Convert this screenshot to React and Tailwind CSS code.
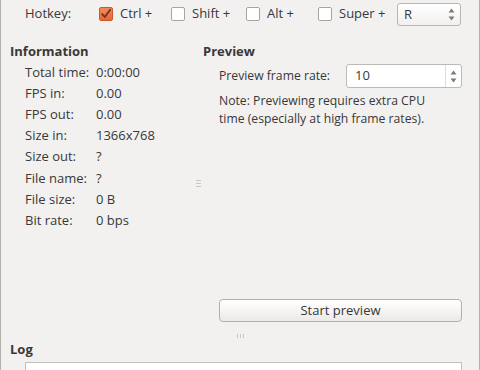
import { ChevronUp, ChevronDown } from 'lucide-react'

function CheckBox({ checked }) {
  if (checked) {
    return (
      <span className="w-[14px] h-[14px] rounded-[2px] border border-[#c9592c] bg-gradient-to-b from-[#f4895a] to-[#e5673a] flex items-center justify-center shrink-0">
        <svg width="12" height="12" viewBox="0 0 12 12">
          <path d="M2.2 6.2 L4.8 9 L10.2 1.8" fill="none" stroke="#6a3420" strokeWidth="1.8" strokeLinecap="round" strokeLinejoin="round" />
        </svg>
      </span>
    )
  }
  return (
    <span className="w-[14px] h-[14px] rounded-[2px] border border-[#a8a5a0] bg-white shrink-0" />
  )
}

function Spinner() {
  return (
    <div className="flex flex-col items-center justify-center w-[14px]">
      <svg width="7" height="5" viewBox="0 0 7 5"><path d="M3.5 0.5 L6.5 4.5 L0.5 4.5 Z" fill="#7d7b78" /></svg>
      <div className="h-[3px]" />
      <svg width="7" height="5" viewBox="0 0 7 5"><path d="M0.5 0.5 L6.5 0.5 L3.5 4.5 Z" fill="#7d7b78" /></svg>
    </div>
  )
}

function InfoRow({ label, value }) {
  return (
    <div className="flex items-center h-[21.15px] pl-[15px]">
      <span className="w-[71px] shrink-0">{label}</span>
      <span>{value}</span>
    </div>
  )
}

export default function App() {
  const info = [
    ['Total time:', '0:00:00'],
    ['FPS in:', '0.00'],
    ['FPS out:', '0.00'],
    ['Size in:', '1366x768'],
    ['Size out:', '?'],
    ['File name:', '?'],
    ['File size:', '0 B'],
    ['Bit rate:', '0 bps'],
  ]

  const keys = [
    { label: 'Ctrl +', checked: true, w: 'w-[72px]' },
    { label: 'Shift +', checked: false, w: 'w-[75px]' },
    { label: 'Alt +', checked: false, w: 'w-[72px]' },
    { label: 'Super +', checked: false, w: 'w-[79px]' },
  ]

  return (
    <div
      className="w-[480px] h-[370px] overflow-hidden bg-[#f2f1f0] border-x border-[#b5b2ad] text-[13px] text-[#383838] flex flex-col"
      style={{ fontFamily: '"Open Sans", "Noto Sans", sans-serif' }}
    >
      {/* Hotkey */}
      <div className="flex items-center h-[28px] pl-[24px] shrink-0">
        <span className="w-[74px]">Hotkey:</span>
        {keys.map((k) => (
          <label key={k.label} className={`flex items-center gap-[7px] ${k.w}`}>
            <CheckBox checked={k.checked} />
            <span>{k.label}</span>
          </label>
        ))}
        <div className="w-[64px] h-[23px] mt-[1px] rounded-[3px] border border-[#b9b6b1] bg-gradient-to-b from-white to-[#f1f0ee] flex items-center justify-between pl-[6px] pr-[2px]">
          <span>R</span>
          <Spinner />
        </div>
      </div>

      {/* Information / Preview */}
      <div className="flex h-[302px] pt-[14px] shrink-0">
        <div className="w-[192px] pl-[9px]">
          <div className="h-[20px] flex items-center font-bold">Information</div>
          {info.map(([l, v]) => (
            <InfoRow key={l} label={l} value={v} />
          ))}
        </div>

        <div className="w-[10px] flex items-center justify-center">
          <div className="flex flex-col gap-[2px] -mt-[6px]">
            <span className="w-[5px] h-px bg-[#c9c6c1]" />
            <span className="w-[5px] h-px bg-[#c9c6c1]" />
            <span className="w-[5px] h-px bg-[#c9c6c1]" />
          </div>
        </div>

        <div className="flex-1 flex flex-col pr-[17px] pb-[8px]">
          <div className="h-[20px] flex items-center font-bold">Preview</div>
          <div className="flex items-center h-[24px] mt-[2px] pl-[16px]">
            <span className="w-[127px] text-[12.2px]">Preview frame rate:</span>
            <div className="flex-1 h-[24px] rounded-[3px] border border-[#bdbab5] bg-white flex items-center justify-between pl-[8px] pr-[1px]">
              <span>10</span>
              <div className="h-full border-l border-[#dedcd8] flex items-center">
                <Spinner />
              </div>
            </div>
          </div>
          <p className="pl-[16px] mt-[4px] leading-[18px] text-[12.2px]">
            Note: Previewing requires extra CPU
            <br />
            time (especially at high frame rates).
          </p>
          <div className="flex-1" />
          <div className="ml-[16px] h-[23px] rounded-[4px] border border-[#b3b0ab] bg-gradient-to-b from-white to-[#eceae7] shadow-[inset_0_1px_0_#fff] flex items-center justify-center">
            Start preview
          </div>
        </div>
      </div>

      {/* Splitter */}
      <div className="h-[12px] flex items-center justify-center shrink-0">
        <div className="flex gap-[2px]">
          <span className="w-px h-[4px] bg-[#c9c6c1]" />
          <span className="w-px h-[4px] bg-[#c9c6c1]" />
          <span className="w-px h-[4px] bg-[#c9c6c1]" />
        </div>
      </div>

      {/* Log */}
      <div className="pl-[9px] shrink-0">
        <div className="h-[16px] flex items-center font-bold">Log</div>
        <div className="ml-[15px] mr-[17px] mt-[4px] h-[40px] border border-[#c3c0bb] bg-white px-[5px] pt-[3px] text-[#555] leading-[16px]">
          [ ------- ] starting ... ? ------
        </div>
      </div>
    </div>
  )
}
